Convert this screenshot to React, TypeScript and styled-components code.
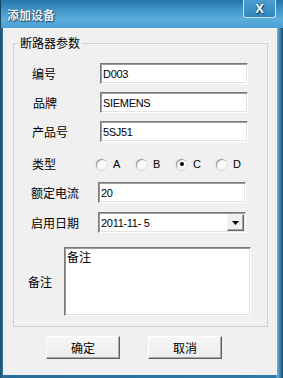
import styled, { createGlobalStyle } from "styled-components";

const cjk = `"Noto Sans CJK SC", "Liberation Sans", sans-serif`;
const latin = `"Liberation Sans", "Noto Sans CJK SC", sans-serif`;

const Global = createGlobalStyle`
  html, body {
    margin: 0;
    padding: 0;
    background: #ffffff;
  }
  * {
    box-sizing: border-box;
  }
`;

function App() {
  return (
    <>
      <Global />
      <Window>
        <TitleBar>
          <Caption>添加设备</Caption>
          <CloseBtn>X</CloseBtn>
        </TitleBar>
        <Body>
          <Group>
            <Legend>断路器参数</Legend>
            <Row $gap={0}>
              <Label $pad={18} $w={68}>编号</Label>
              <Input defaultValue="D003" readOnly />
            </Row>
            <Row $gap={8}>
              <Label $pad={19} $w={67}>品牌</Label>
              <Input defaultValue="SIEMENS" readOnly />
            </Row>
            <Row $gap={8}>
              <Label $pad={18} $w={68}>产品号</Label>
              <Input defaultValue="5SJ51" readOnly />
            </Row>
            <RadioRow>
              <Label $pad={18} $w={64}>类型</Label>
              <Radios>
                {["A", "B", "C", "D"].map((l) => (
                  <RadioItem key={l}>
                    <RadioDot $checked={l === "C"} />
                    <span>{l}</span>
                  </RadioItem>
                ))}
              </Radios>
            </RadioRow>
            <Row $gap={11}>
              <Label $pad={17} $w={67}>额定电流</Label>
              <Input defaultValue="20" readOnly />
            </Row>
            <Row $gap={9}>
              <Label $pad={17} $w={67}>启用日期</Label>
              <Combo>
                <ComboText>2011-11- 5</ComboText>
                <DropBtn>
                  <svg width="7" height="4" viewBox="0 0 7 4">
                    <path d="M0 0h7L3.5 4z" fill="#000" />
                  </svg>
                </DropBtn>
              </Combo>
            </Row>
            <NoteRow>
              <Label $pad={14} $w={36}>备注</Label>
              <Note defaultValue="备注" readOnly />
            </NoteRow>
          </Group>
          <Buttons>
            <Button>确定</Button>
            <Button>取消</Button>
          </Buttons>
        </Body>
      </Window>
    </>
  );
}

export default App;

const Window = styled.div`
  width: 283px;
  height: 378px;
  display: flex;
  flex-direction: column;
  background: linear-gradient(to right, #1c4a66 0, #2a6c97 2px, #2f79a8 276px, #6fb4dc 277px, #4a93c0 279px, #1d4f6e 283px);
  overflow: hidden;
`;

const TitleBar = styled.div`
  height: 28px;
  flex: none;
  display: flex;
  align-items: flex-start;
  justify-content: space-between;
  background: linear-gradient(to bottom, #2674a8 0%, #3f95c9 35%, #5aaedb 70%, #4a9fd0 100%);
  border-left: 1px solid #1a4561;
`;

const Caption = styled.div`
  font-family: ${cjk};
  font-size: 12px;
  font-weight: 700;
  line-height: 14px;
  color: #e6eef3;
  text-shadow: 1px 1px 1px #1d4d6c, 0 0 2px #245a7e;
  margin: 8px 0 0 6px;
`;

const CloseBtn = styled.div`
  width: 33px;
  height: 18px;
  margin-right: 7px;
  display: flex;
  align-items: center;
  justify-content: center;
  border: 1px solid #c9e0ee;
  border-top: none;
  border-radius: 0 0 3px 3px;
  background: linear-gradient(to bottom, #4c9fd0, #2f86bd);
  font-family: ${latin};
  font-weight: 700;
  font-size: 13px;
  color: #ffffff;
  text-shadow: 0 0 2px #1b3f58, 1px 1px 0 #1b3f58;
`;

const Body = styled.div`
  flex: 1;
  margin: 0 6px 3px 3px;
  padding: 8px 9px 0 10px;
  background: #f0f0f0;
  display: flex;
  flex-direction: column;
`;

const Group = styled.fieldset`
  margin: 0;
  padding: 13px 0 10px 0;
  border: 1px solid #cbd3d8;
  min-width: 0;
  display: flex;
  flex-direction: column;
`;

const Legend = styled.legend`
  font-family: ${cjk};
  font-size: 12px;
  line-height: 14px;
  color: #000;
  padding: 0 2px;
  margin-left: 4px;
`;

const Row = styled.div<{ $gap: number }>`
  display: flex;
  align-items: center;
  height: 21px;
  margin-top: ${(p) => p.$gap}px;
`;

const Label = styled.div<{ $pad: number; $w: number }>`
  flex: none;
  padding-left: ${(p) => p.$pad}px;
  width: ${(p) => p.$pad + p.$w}px;
  font-family: ${cjk};
  font-size: 12px;
  line-height: 14px;
  color: #000;
  white-space: nowrap;
`;

const sunken = `
  border-style: solid;
  border-width: 1px;
  border-color: #7a7a7a #ffffff #ffffff #7a7a7a;
  box-shadow: inset 1px 1px 0 #9c9c9c, inset -1px -1px 0 #e3e3e3;
  background: #ffffff;
`;

const Input = styled.input`
  ${sunken}
  width: 148px;
  height: 21px;
  padding: 0 0 0 2px;
  margin: 0;
  outline: none;
  font-family: ${latin};
  font-size: 11px;
  letter-spacing: -0.3px;
  color: #000;
`;

const RadioRow = styled.div`
  display: flex;
  align-items: center;
  height: 14px;
  margin-top: 15px;
`;

const Radios = styled.div`
  display: flex;
`;

const RadioItem = styled.div`
  width: 40px;
  display: flex;
  align-items: center;
  gap: 6px;
  font-family: ${latin};
  font-size: 11px;
  color: #000;
`;

const RadioDot = styled.span<{ $checked: boolean }>`
  width: 11px;
  height: 11px;
  border-radius: 50%;
  background: #fbfbfb;
  box-shadow: inset 1px 1px 0 #9a9a9a, inset -1px -1px 0 #e8e8e8, 0 0 0 1px #e2e2e2;
  display: flex;
  align-items: center;
  justify-content: center;
  &::after {
    content: "";
    width: 4px;
    height: 4px;
    border-radius: 50%;
    background: ${(p) => (p.$checked ? "#000" : "transparent")};
  }
`;

const Combo = styled.div`
  ${sunken}
  width: 148px;
  height: 21px;
  display: flex;
  align-items: center;
  justify-content: space-between;
  padding: 0 1px 0 2px;
`;

const ComboText = styled.span`
  font-family: ${latin};
  font-size: 11px;
  letter-spacing: -0.3px;
  white-space: pre;
  color: #000;
`;

const DropBtn = styled.div`
  width: 17px;
  height: 17px;
  display: flex;
  align-items: center;
  justify-content: center;
  background: #f0f0f0;
  border-style: solid;
  border-width: 1px;
  border-color: #f6f6f6 #6a6a6a #6a6a6a #f6f6f6;
  box-shadow: inset -1px -1px 0 #a0a0a0;
`;

const NoteRow = styled.div`
  display: flex;
  align-items: center;
  margin-top: 14px;
`;

const Note = styled.textarea`
  ${sunken}
  width: 187px;
  height: 69px;
  margin: 0;
  padding: 2px 2px;
  resize: none;
  outline: none;
  font-family: ${cjk};
  font-size: 12px;
  line-height: 14px;
  color: #000;
`;

const Buttons = styled.div`
  display: flex;
  gap: 28px;
  padding-left: 33px;
  margin-top: 9px;
`;

const Button = styled.button`
  width: 74px;
  height: 23px;
  margin: 0;
  padding: 0;
  background: linear-gradient(to bottom, #f7f7f7, #ebebeb);
  border-style: solid;
  border-width: 1px;
  border-color: #ffffff #5f5f5f #5f5f5f #ffffff;
  box-shadow: inset -1px -1px 0 #a8a8a8;
  font-family: ${cjk};
  font-size: 12px;
  color: #000;
`;
